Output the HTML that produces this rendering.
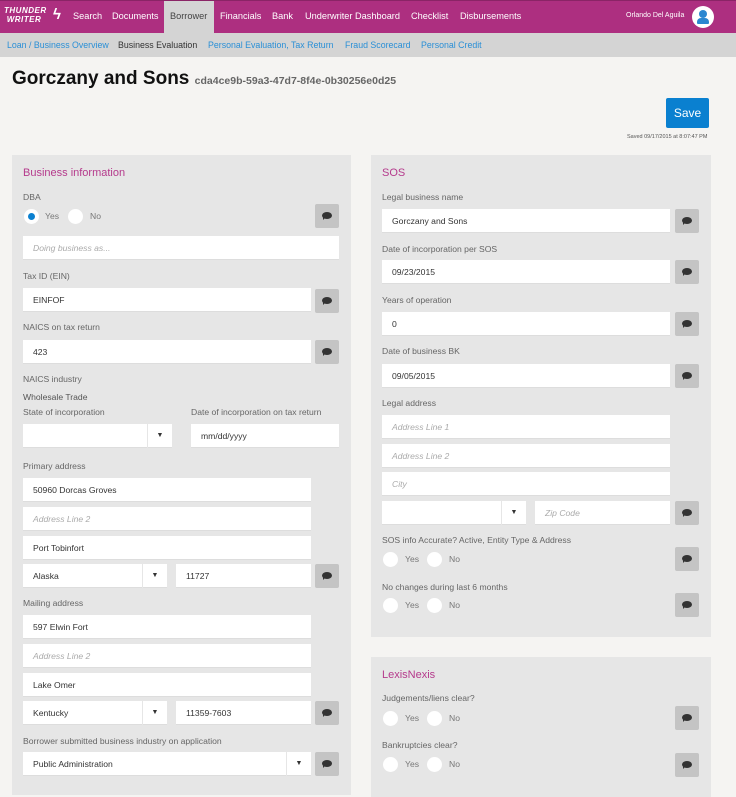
<!DOCTYPE html>
<html><head><meta charset="utf-8"><style>
*{box-sizing:border-box;margin:0;padding:0}
body{width:736px;height:785px;overflow:hidden;background:#f5f4f2;font-family:"Liberation Sans",sans-serif;position:relative}
.a{position:absolute;white-space:nowrap}
.nav{left:0;top:0;width:736px;height:33px;background:#ad2f80;border-top:1px solid #8a2466}
.nv{top:11px;color:#fff;font-size:9.2px}
.sub{left:0;top:33px;width:736px;height:24px;background:#d4d4d4}
.sl{top:40px;font-size:8.8px;color:#2a8fd6}
.p{background:#e6e6e6}
.h{color:#b53a8c;font-size:11px}
.l{font-size:8.6px;color:#666}
.i{background:#fff;height:24px;font-size:8.6px;color:#333;padding:0 0 0 10px;line-height:24px;border-bottom:1px solid #ddd}
.ph{color:#aaa;font-style:italic}
.b{width:24px;height:24px;background:#c4c4c4;border-radius:2px}
.b:after{content:"";position:absolute;left:7px;top:8px;width:10px;height:7px;background:#333;border-radius:50%}
.b:before{content:"";position:absolute;left:8px;top:13px;border-left:3px solid #333;border-bottom:3px solid transparent}
.s:after{content:"▼";position:absolute;right:0;top:0;width:24px;height:24px;border-left:1px solid #e6e6e6;text-align:center;font-size:7px;color:#333;line-height:24px}
.r{width:15px;height:15px;border-radius:50%;background:#fff}
.rt{font-size:8.6px;color:#777}
</style></head><body>
<div class="a nav"></div>
<div class="a" style="left:4px;top:6px;color:#fff;font-weight:bold;font-style:italic;font-size:8px;line-height:9px;letter-spacing:.5px">THUNDER<br>&nbsp;WRITER</div>
<div class="a" style="left:53px;top:6px;color:#fff;font-size:15px;font-weight:bold">ϟ</div>
<div class="a" style="left:164px;top:1px;width:50px;height:32px;background:#d4d4d4"></div>
<span class="a nv" style="left:73px">Search</span>
<span class="a nv" style="left:112px">Documents</span>
<span class="a nv" style="left:170px;color:#444">Borrower</span>
<span class="a nv" style="left:220px">Financials</span>
<span class="a nv" style="left:272px">Bank</span>
<span class="a nv" style="left:305px">Underwriter Dashboard</span>
<span class="a nv" style="left:411px">Checklist</span>
<span class="a nv" style="left:460px">Disbursements</span>
<span class="a" style="left:626px;top:12px;color:#fff;font-size:7px">Orlando Del Aguila</span>
<div class="a" style="left:692px;top:6px;width:22px;height:22px;border-radius:50%;background:#fff"></div>
<div class="a" style="left:699px;top:10px;width:8px;height:8px;border-radius:50%;background:#2a86d0"></div>
<div class="a" style="left:697px;top:18px;width:12px;height:6px;border-radius:4px 4px 1px 1px;background:#2a86d0"></div>
<div class="a sub"></div>
<span class="a sl" style="left:7px">Loan / Business Overview</span>
<span class="a sl" style="left:118px;color:#333">Business Evaluation</span>
<span class="a sl" style="left:208px">Personal Evaluation, Tax Return</span>
<span class="a sl" style="left:345px">Fraud Scorecard</span>
<span class="a sl" style="left:421px">Personal Credit</span>
<div class="a" style="left:12px;top:68px;font-size:19px;font-weight:bold;color:#111">Gorczany and Sons <span style="font-size:10.5px;color:#666">cda4ce9b-59a3-47d7-8f4e-0b30256e0d25</span></div>
<div class="a" style="left:666px;top:98px;width:43px;height:30px;background:#0a80d0;border-radius:2px;color:#fff;font-size:12px;text-align:center;line-height:30px">Save</div>
<div class="a" style="left:627px;top:134px;font-size:5.5px;color:#555">Saved 09/17/2015 at 8:07:47 PM</div>

<div class="a p" style="left:12px;top:155px;width:339px;height:640px"></div>
<div class="a h" style="left:23px;top:167px">Business information</div>
<div class="a l" style="left:23px;top:192px">DBA</div>
<div class="a r" style="left:24px;top:209px"></div><div class="a" style="left:28px;top:213px;width:7px;height:7px;border-radius:50%;background:#0a80d0"></div>
<span class="a rt" style="left:45px;top:211px">Yes</span>
<div class="a r" style="left:68px;top:209px"></div><span class="a rt" style="left:90px;top:211px">No</span>
<div class="a b" style="left:315px;top:204px"></div>
<div class="a i ph" style="left:23px;top:236px;width:316px">Doing business as...</div>
<div class="a l" style="left:23px;top:271px">Tax ID (EIN)</div>
<div class="a i" style="left:23px;top:288px;width:288px">EINFOF</div><div class="a b" style="left:315px;top:289px"></div>
<div class="a l" style="left:23px;top:322px">NAICS on tax return</div>
<div class="a i" style="left:23px;top:340px;width:288px">423</div><div class="a b" style="left:315px;top:340px"></div>
<div class="a l" style="left:23px;top:374px">NAICS industry</div>
<div class="a l" style="left:23px;top:392px;color:#555">Wholesale Trade</div>
<div class="a l" style="left:23px;top:407px">State of incorporation</div>
<div class="a l" style="left:191px;top:407px">Date of incorporation on tax return</div>
<div class="a i s" style="left:23px;top:424px;width:149px"></div>
<div class="a i" style="left:191px;top:424px;width:148px">mm/dd/yyyy</div>
<div class="a l" style="left:23px;top:461px">Primary address</div>
<div class="a i" style="left:23px;top:478px;width:288px">50960 Dorcas Groves</div>
<div class="a i ph" style="left:23px;top:507px;width:288px">Address Line 2</div>
<div class="a i" style="left:23px;top:536px;width:288px">Port Tobinfort</div>
<div class="a i s" style="left:23px;top:564px;width:144px">Alaska</div>
<div class="a i" style="left:176px;top:564px;width:135px">11727</div><div class="a b" style="left:315px;top:564px"></div>
<div class="a l" style="left:23px;top:598px">Mailing address</div>
<div class="a i" style="left:23px;top:615px;width:288px">597 Elwin Fort</div>
<div class="a i ph" style="left:23px;top:644px;width:288px">Address Line 2</div>
<div class="a i" style="left:23px;top:673px;width:288px">Lake Omer</div>
<div class="a i s" style="left:23px;top:701px;width:144px">Kentucky</div>
<div class="a i" style="left:176px;top:701px;width:135px">11359-7603</div><div class="a b" style="left:315px;top:701px"></div>
<div class="a l" style="left:23px;top:736px">Borrower submitted business industry on application</div>
<div class="a i s" style="left:23px;top:752px;width:288px">Public Administration</div><div class="a b" style="left:315px;top:752px"></div>

<div class="a p" style="left:371px;top:155px;width:340px;height:482px"></div>
<div class="a h" style="left:382px;top:167px">SOS</div>
<div class="a l" style="left:382px;top:192px">Legal business name</div>
<div class="a i" style="left:382px;top:209px;width:288px">Gorczany and Sons</div><div class="a b" style="left:675px;top:209px"></div>
<div class="a l" style="left:382px;top:244px">Date of incorporation per SOS</div>
<div class="a i" style="left:382px;top:260px;width:288px">09/23/2015</div><div class="a b" style="left:675px;top:260px"></div>
<div class="a l" style="left:382px;top:295px">Years of operation</div>
<div class="a i" style="left:382px;top:312px;width:288px">0</div><div class="a b" style="left:675px;top:312px"></div>
<div class="a l" style="left:382px;top:346px">Date of business BK</div>
<div class="a i" style="left:382px;top:364px;width:288px">09/05/2015</div><div class="a b" style="left:675px;top:364px"></div>
<div class="a l" style="left:382px;top:398px">Legal address</div>
<div class="a i ph" style="left:382px;top:415px;width:288px">Address Line 1</div>
<div class="a i ph" style="left:382px;top:444px;width:288px">Address Line 2</div>
<div class="a i ph" style="left:382px;top:472px;width:288px">City</div>
<div class="a i s" style="left:382px;top:501px;width:144px"></div>
<div class="a i ph" style="left:535px;top:501px;width:135px">Zip Code</div><div class="a b" style="left:675px;top:501px"></div>
<div class="a l" style="left:382px;top:535px">SOS info Accurate? Active, Entity Type &amp; Address</div>
<div class="a r" style="left:383px;top:552px"></div><span class="a rt" style="left:405px;top:554px">Yes</span>
<div class="a r" style="left:427px;top:552px"></div><span class="a rt" style="left:449px;top:554px">No</span>
<div class="a b" style="left:675px;top:547px"></div>
<div class="a l" style="left:382px;top:582px">No changes during last 6 months</div>
<div class="a r" style="left:383px;top:598px"></div><span class="a rt" style="left:405px;top:600px">Yes</span>
<div class="a r" style="left:427px;top:598px"></div><span class="a rt" style="left:449px;top:600px">No</span>
<div class="a b" style="left:675px;top:593px"></div>

<div class="a p" style="left:371px;top:657px;width:340px;height:140px"></div>
<div class="a h" style="left:382px;top:669px">LexisNexis</div>
<div class="a l" style="left:382px;top:693px">Judgements/liens clear?</div>
<div class="a r" style="left:383px;top:711px"></div><span class="a rt" style="left:405px;top:713px">Yes</span>
<div class="a r" style="left:427px;top:711px"></div><span class="a rt" style="left:449px;top:713px">No</span>
<div class="a b" style="left:675px;top:706px"></div>
<div class="a l" style="left:382px;top:740px">Bankruptcies clear?</div>
<div class="a r" style="left:383px;top:757px"></div><span class="a rt" style="left:405px;top:759px">Yes</span>
<div class="a r" style="left:427px;top:757px"></div><span class="a rt" style="left:449px;top:759px">No</span>
<div class="a b" style="left:675px;top:753px"></div>
</body></html>
